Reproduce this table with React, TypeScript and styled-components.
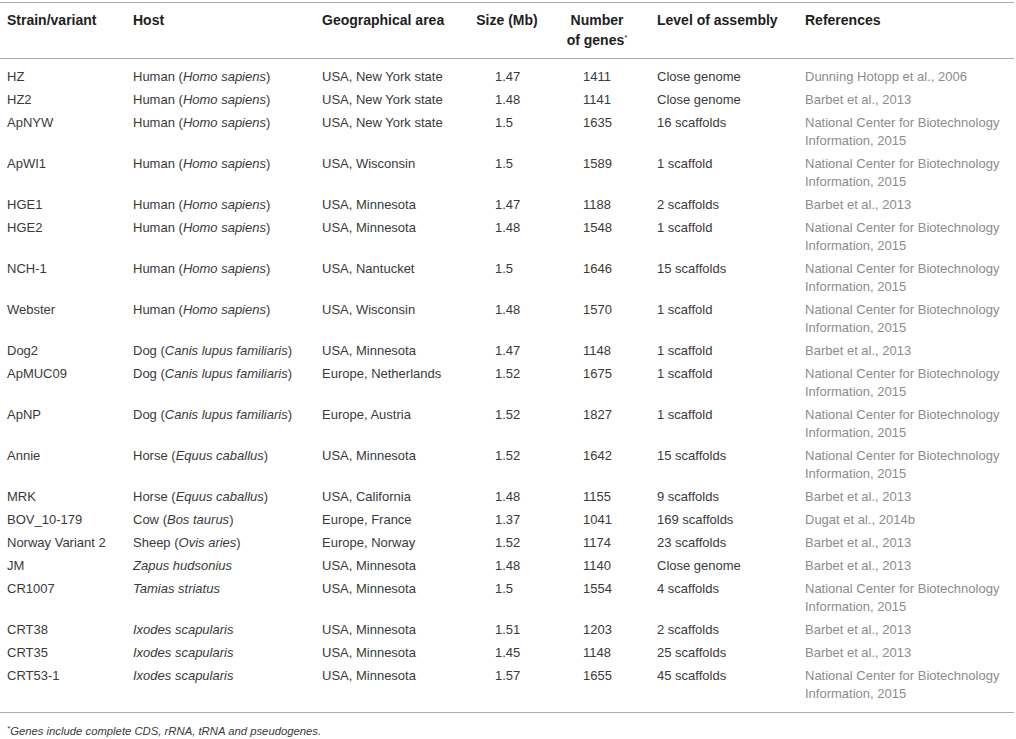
import React from "react";
import styled, { createGlobalStyle } from "styled-components";

const GlobalStyle = createGlobalStyle`
  html, body { margin: 0; padding: 0; background: #ffffff; }
  body { font-family: "Liberation Sans", Arial, sans-serif; }
`;

const Page = styled.div`
  width: 1016px;
  padding-top: 2px;
  box-sizing: border-box;
`;

const Table = styled.table`
  width: 1014px;
  table-layout: fixed;
  border-collapse: collapse;
  font-family: "Liberation Sans", Arial, sans-serif;
  font-size: 13px;
  color: #3a3a3a;
`;

const HeadRow = styled.tr`
  border-top: 1px solid #ababab;
  border-bottom: 1px solid #ababab;
`;

type Align = "left" | "center";

const Th = styled.th<{ $pl?: number; $align?: Align }>`
  font-weight: bold;
  font-size: 14px;
  color: #1e1e1e;
  line-height: 20px;
  vertical-align: top;
  text-align: ${(p) => p.$align ?? "left"};
  padding: 7px 0 8px ${(p) => p.$pl ?? 7}px;
`;

const Row = styled.tr`
  &:first-child td { padding-top: 9px; }
  &:last-child td { padding-bottom: 9px; }
  &:last-child { border-bottom: 1px solid #ababab; }
`;

const Td = styled.td<{ $pl?: number; $muted?: boolean }>`
  line-height: 18px;
  vertical-align: top;
  padding: 3px 0 2px ${(p) => p.$pl ?? 7}px;
  color: ${(p) => (p.$muted ? "#8c8c8c" : "#3a3a3a")};
`;

const Sup = styled.sup`
  font-size: 8px;
  font-weight: normal;
  vertical-align: top;
  position: relative;
  top: -2px;
`;

const Footnote = styled.p`
  margin: 10px 0 0 7px;
  font-family: "Liberation Sans", Arial, sans-serif;
  font-size: 11.3px;
  font-style: italic;
  line-height: 16px;
  color: #3a3a3a;
`;

type Host = { common?: string; latin: string };
type Entry = [string, Host, string, string, string, string, string];

const NCBI = "National Center for Biotechnology Information, 2015";
const BARBET = "Barbet et al., 2013";
const human: Host = { common: "Human", latin: "Homo sapiens" };
const dog: Host = { common: "Dog", latin: "Canis lupus familiaris" };
const horse: Host = { common: "Horse", latin: "Equus caballus" };
const tick: Host = { latin: "Ixodes scapularis" };

const rows: Entry[] = [
  ["HZ", human, "USA, New York state", "1.47", "1411", "Close genome", "Dunning Hotopp et al., 2006"],
  ["HZ2", human, "USA, New York state", "1.48", "1141", "Close genome", BARBET],
  ["ApNYW", human, "USA, New York state", "1.5", "1635", "16 scaffolds", NCBI],
  ["ApWI1", human, "USA, Wisconsin", "1.5", "1589", "1 scaffold", NCBI],
  ["HGE1", human, "USA, Minnesota", "1.47", "1188", "2 scaffolds", BARBET],
  ["HGE2", human, "USA, Minnesota", "1.48", "1548", "1 scaffold", NCBI],
  ["NCH-1", human, "USA, Nantucket", "1.5", "1646", "15 scaffolds", NCBI],
  ["Webster", human, "USA, Wisconsin", "1.48", "1570", "1 scaffold", NCBI],
  ["Dog2", dog, "USA, Minnesota", "1.47", "1148", "1 scaffold", BARBET],
  ["ApMUC09", dog, "Europe, Netherlands", "1.52", "1675", "1 scaffold", NCBI],
  ["ApNP", dog, "Europe, Austria", "1.52", "1827", "1 scaffold", NCBI],
  ["Annie", horse, "USA, Minnesota", "1.52", "1642", "15 scaffolds", NCBI],
  ["MRK", horse, "USA, California", "1.48", "1155", "9 scaffolds", BARBET],
  ["BOV_10-179", { common: "Cow", latin: "Bos taurus" }, "Europe, France", "1.37", "1041", "169 scaffolds", "Dugat et al., 2014b"],
  ["Norway Variant 2", { common: "Sheep", latin: "Ovis aries" }, "Europe, Norway", "1.52", "1174", "23 scaffolds", BARBET],
  ["JM", { latin: "Zapus hudsonius" }, "USA, Minnesota", "1.48", "1140", "Close genome", BARBET],
  ["CR1007", { latin: "Tamias striatus" }, "USA, Minnesota", "1.5", "1554", "4 scaffolds", NCBI],
  ["CRT38", tick, "USA, Minnesota", "1.51", "1203", "2 scaffolds", BARBET],
  ["CRT35", tick, "USA, Minnesota", "1.45", "1148", "25 scaffolds", BARBET],
  ["CRT53-1", tick, "USA, Minnesota", "1.57", "1655", "45 scaffolds", NCBI],
];

const HostCell: React.FC<{ host: Host }> = ({ host }) =>
  host.common ? (
    <>
      {host.common} (<i>{host.latin}</i>)
    </>
  ) : (
    <i>{host.latin}</i>
  );

export default function App() {
  return (
    <Page>
      <GlobalStyle />
      <Table>
        <colgroup>
          <col style={{ width: 126 }} />
          <col style={{ width: 189 }} />
          <col style={{ width: 145 }} />
          <col style={{ width: 94 }} />
          <col style={{ width: 86 }} />
          <col style={{ width: 158 }} />
          <col style={{ width: 216 }} />
        </colgroup>
        <thead>
          <HeadRow>
            <Th>Strain/variant</Th>
            <Th>Host</Th>
            <Th>Geographical area</Th>
            <Th $align="center" $pl={0}>Size (Mb)</Th>
            <Th $align="center" $pl={0}>
              Number
              <br />
              of genes<Sup>*</Sup>
            </Th>
            <Th $pl={17}>Level of assembly</Th>
            <Th>References</Th>
          </HeadRow>
        </thead>
        <tbody>
          {rows.map(([strain, host, area, size, genes, level, ref]) => (
            <Row key={strain}>
              <Td>{strain}</Td>
              <Td>
                <HostCell host={host} />
              </Td>
              <Td>{area}</Td>
              <Td $pl={35}>{size}</Td>
              <Td $pl={29}>{genes}</Td>
              <Td $pl={17}>{level}</Td>
              <Td $muted>{ref}</Td>
            </Row>
          ))}
        </tbody>
      </Table>
      <Footnote>
        <Sup>*</Sup>Genes include complete CDS, rRNA, tRNA and pseudogenes.
      </Footnote>
    </Page>
  );
}
